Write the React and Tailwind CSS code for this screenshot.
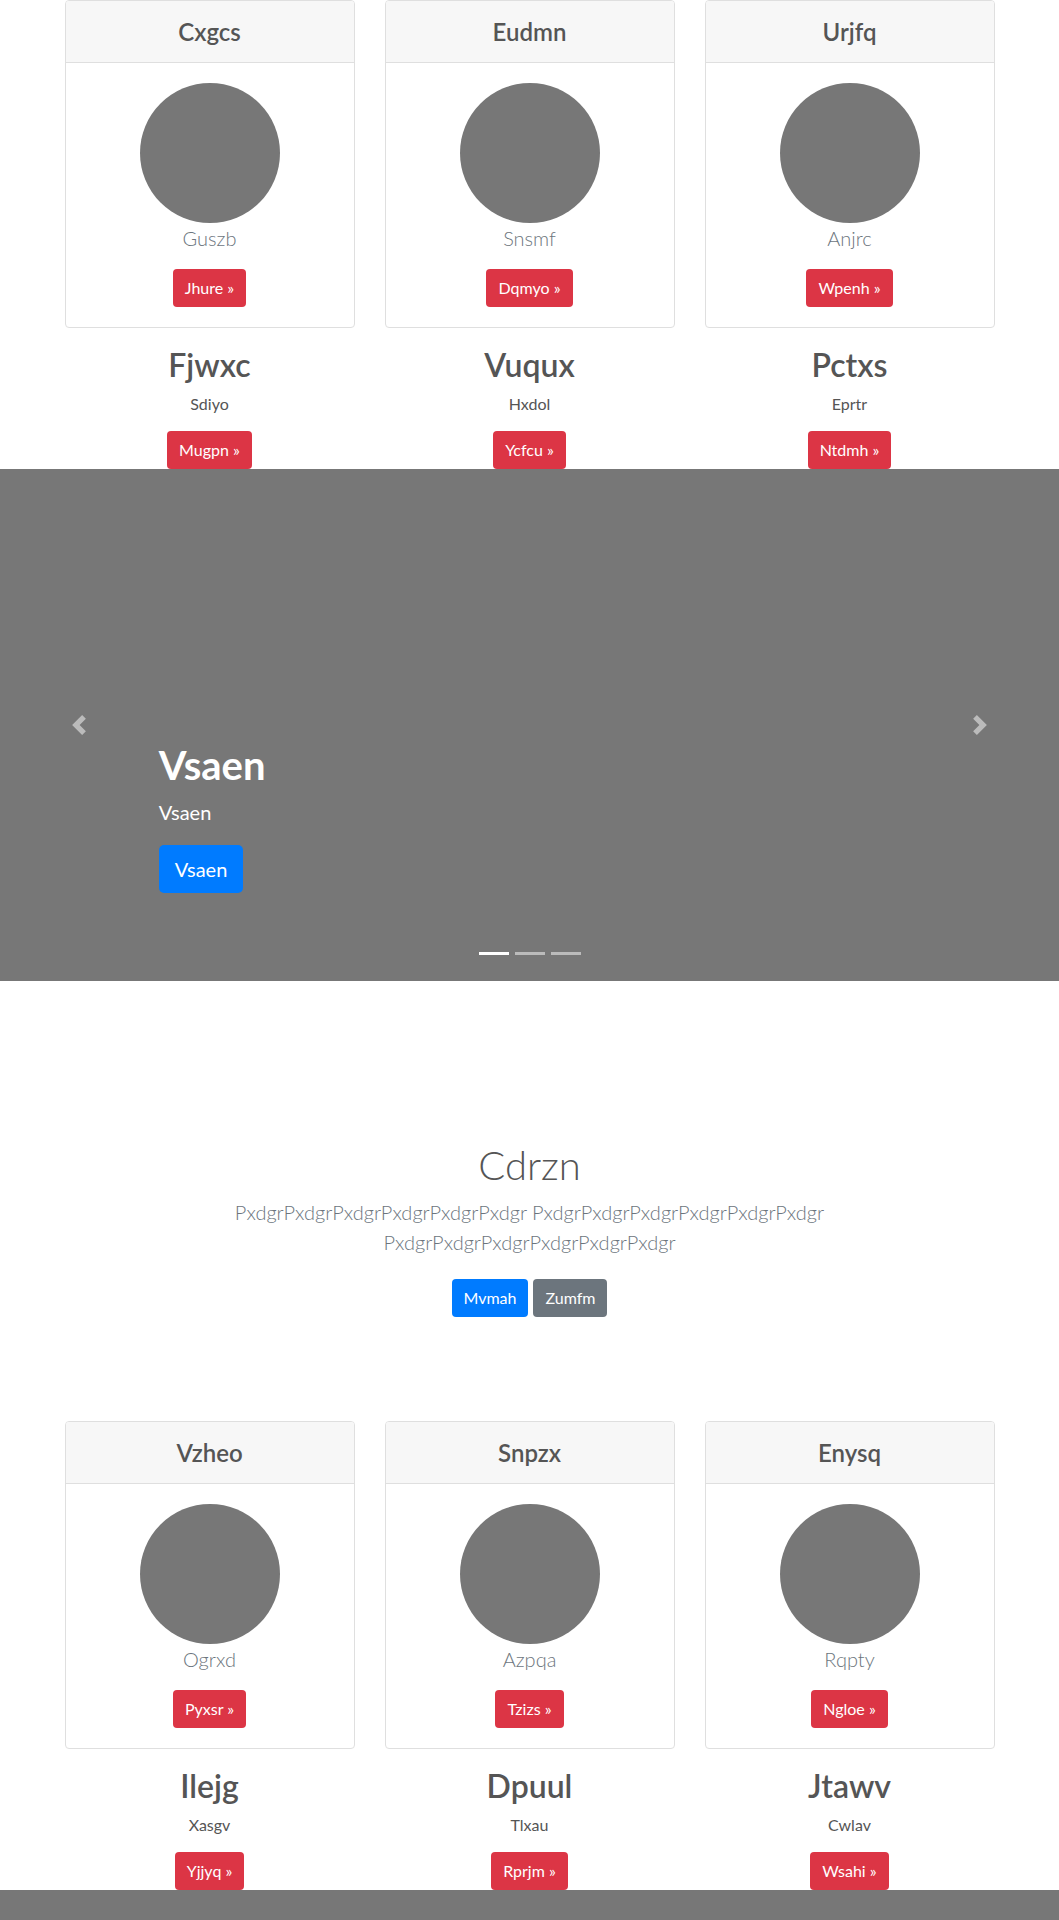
const TOP_COLUMNS = [
  { title: 'Cxgcs', caption: 'Guszb', cardBtn: 'Jhure', heading: 'Fjwxc', text: 'Sdiyo', btn: 'Mugpn' },
  { title: 'Eudmn', caption: 'Snsmf', cardBtn: 'Dqmyo', heading: 'Vuqux', text: 'Hxdol', btn: 'Ycfcu' },
  { title: 'Urjfq', caption: 'Anjrc', cardBtn: 'Wpenh', heading: 'Pctxs', text: 'Eprtr', btn: 'Ntdmh' },
];

const BOTTOM_COLUMNS = [
  { title: 'Vzheo', caption: 'Ogrxd', cardBtn: 'Pyxsr', heading: 'Ilejg', text: 'Xasgv', btn: 'Yjjyq' },
  { title: 'Snpzx', caption: 'Azpqa', cardBtn: 'Tzizs', heading: 'Dpuul', text: 'Tlxau', btn: 'Rprjm' },
  { title: 'Enysq', caption: 'Rqpty', cardBtn: 'Ngloe', heading: 'Jtawv', text: 'Cwlav', btn: 'Wsahi' },
];

export default function App() {
  return (
    <div className="min-h-[1920px] bg-white font-['Lato',sans-serif] text-[#555]">
      <CardRow columns={TOP_COLUMNS} />

      <Carousel title="Vsaen" text="Vsaen" action="Vsaen" />

      <section className="pt-[160px] text-center">
        <div className="mx-auto max-w-[640px] px-[15px]">
          <h1 className="text-[40px] leading-[48px] font-light text-[#555]">Cdrzn</h1>
          <p className="mt-2 text-[20px] leading-[30px] font-light text-[#6c757d]">
            PxdgrPxdgrPxdgrPxdgrPxdgrPxdgr PxdgrPxdgrPxdgrPxdgrPxdgrPxdgr PxdgrPxdgrPxdgrPxdgrPxdgrPxdgr
          </p>
          <div className="mt-[22px] flex justify-center gap-[5px]">
            <a href="#" className="rounded bg-[#007bff] px-[12px] py-[7px] text-base leading-6 text-white">
              Mvmah
            </a>
            <a href="#" className="rounded bg-[#6c757d] px-[12px] py-[7px] text-base leading-6 text-white">
              Zumfm
            </a>
          </div>
        </div>
      </section>

      <div className="pt-[104px]">
        <CardRow columns={BOTTOM_COLUMNS} />
      </div>

      <div className="h-[30px] bg-[#777]" />
    </div>
  );
}

function CardRow({ columns }) {
  return (
    <div className="mx-auto grid w-[960px] grid-cols-3">
      {columns.map((col) => (
        <div key={col.title} className="flex flex-col items-center px-[15px] text-center">
          <div className="w-full overflow-hidden rounded border border-[#dfdfdf]">
            <div className="flex h-[62px] items-center justify-center border-b border-[#dfdfdf] bg-[#f7f7f7]">
              <h4 className="text-[24px] leading-[29px] font-semibold text-[#555]">{col.title}</h4>
            </div>
            <div className="flex flex-col items-center px-5 pt-5 pb-5">
              <div className="h-[140px] w-[140px] rounded-full bg-[#777]" />
              <p className="text-[20px] leading-[30px] font-light text-[#6c757d]">{col.caption}</p>
              <a href="#" className="mt-4 rounded bg-[#dc3545] px-[12px] py-[7px] text-base leading-6 text-white">
                {col.cardBtn} »
              </a>
            </div>
          </div>
          <h2 className="mt-[18px] text-[32px] leading-[38px] font-semibold text-[#555]">{col.heading}</h2>
          <p className="mt-2 text-base leading-6 text-[#555]">{col.text}</p>
          <a href="#" className="mt-[15px] rounded bg-[#dc3545] px-[12px] py-[7px] text-base leading-6 text-white">
            {col.btn} »
          </a>
        </div>
      ))}
    </div>
  );
}

function Carousel({ title, text, action }) {
  return (
    <div className="relative flex h-[512px] flex-col justify-end bg-[#777] pb-[88px] pl-[15%] pr-[15%] text-white">
      <h1 className="text-[40px] leading-[48px] font-bold">{title}</h1>
      <p className="mt-2 text-[20px] leading-[30px]">{text}</p>
      <div className="mt-[18px]">
        <a href="#" className="inline-block rounded-[5px] bg-[#007bff] px-4 py-[9px] text-[20px] leading-[30px] text-white">
          {action}
        </a>
      </div>

      <div className="absolute inset-y-0 left-0 flex w-[15%] items-center justify-center opacity-50">
        <svg width="20" height="20" viewBox="0 0 8 8" fill="#fff">
          <path d="M5.25 0l-4 4 4 4 1.5-1.5L4.25 4l2.5-2.5L5.25 0z" />
        </svg>
      </div>
      <div className="absolute inset-y-0 right-0 flex w-[15%] items-center justify-center opacity-50">
        <svg width="20" height="20" viewBox="0 0 8 8" fill="#fff">
          <path d="M2.75 0l-1.5 1.5L3.75 4l-2.5 2.5L2.75 8l4-4-4-4z" />
        </svg>
      </div>

      <div className="absolute bottom-[26px] left-1/2 flex -translate-x-1/2 gap-[6px]">
        <span className="h-[3px] w-[30px] bg-white" />
        <span className="h-[3px] w-[30px] bg-white/50" />
        <span className="h-[3px] w-[30px] bg-white/50" />
      </div>
    </div>
  );
}
